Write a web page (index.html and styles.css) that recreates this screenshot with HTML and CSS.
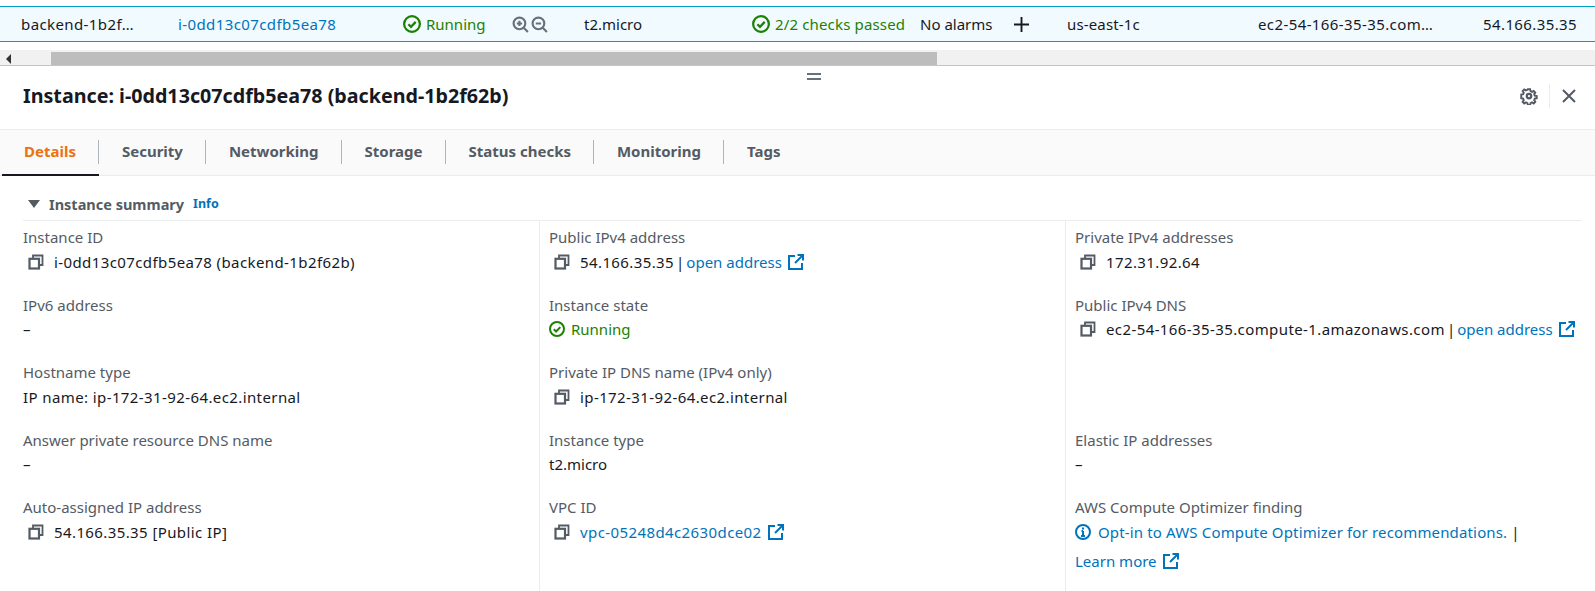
FILE: index.html
```html
<!DOCTYPE html>
<html lang="en">
<head>
<meta charset="utf-8">
<title>Instance details</title>
<link rel="stylesheet" href="styles.css">
</head>
<body>
<svg class="defs" width="0" height="0" aria-hidden="true">
  <symbol id="check" viewBox="0 0 16 16"><circle cx="8" cy="8" r="7" fill="none" stroke="currentColor" stroke-width="2"/><path d="M4.800 8.200l2.300 2.300 4.200-4.400" fill="none" stroke="currentColor" stroke-width="2"/></symbol>
  <symbol id="copy" viewBox="0 0 16 16"><path d="M5 4V1.500h9.500V11H11.500" fill="none" stroke="currentColor" stroke-width="1.800"/><rect x="1.500" y="4.800" width="9.500" height="9.700" fill="none" stroke="currentColor" stroke-width="2.200"/></symbol>
  <symbol id="ext" viewBox="0 0 16 16"><path d="M7 2H1v13h13V9" fill="none" stroke="currentColor" stroke-width="2"/><path d="M9.500 1H15v5.500M15 1L7 9" fill="none" stroke="currentColor" stroke-width="2"/></symbol>
</svg>
<div class="row">
  <div class="cell c1 num">backend-1b2f…</div>
  <div class="cell c2 link num">i-0dd13c07cdfb5ea78</div>
  <div class="cell c3 ok"><svg class="ico"><use href="#check"/></svg>Running</div>
  <div class="cell c4">
    <svg class="zoom" viewBox="0 0 16 16"><circle cx="7" cy="7" r="5.500" fill="none" stroke="currentColor" stroke-width="2"/><path d="M4.500 7h5M7 4.500v5M11 11l4 4" fill="none" stroke="currentColor" stroke-width="2"/></svg>
    <svg class="zoom" viewBox="0 0 16 16"><circle cx="7" cy="7" r="5.500" fill="none" stroke="currentColor" stroke-width="2"/><path d="M4.500 7h5M11 11l4 4" fill="none" stroke="currentColor" stroke-width="2"/></svg>
  </div>
  <div class="cell c5">t2.micro</div>
  <div class="cell c6 ok"><svg class="ico"><use href="#check"/></svg>2/2 checks passed</div>
  <div class="cell c7">No alarms</div>
  <div class="cell c8"><svg class="plus" viewBox="0 0 16 16"><path d="M8 0v16M0 8h16" fill="none" stroke="currentColor" stroke-width="2"/></svg></div>
  <div class="cell c9">us-east-1c</div>
  <div class="cell c10 num">ec2-54-166-35-35.com…</div>
  <div class="cell c11 num">54.166.35.35</div>
</div>
<div class="scrollbar">
  <span class="arrow"></span>
  <span class="thumb"></span>
</div>
<div class="handle"><span></span><span></span></div>
<header class="head">
  <h1>Instance: i-0dd13c07cdfb5ea78 (backend-1b2f62b)</h1>
  <div class="head-actions">
    <svg class="gear" viewBox="0 0 16 16"><path d="M6.800 1h2.400l.4 2 1.500.7 1.800-1 1.600 1.700-1.100 1.700.6 1.500 2 .4v2.400l-2 .4-.6 1.500 1.100 1.700-1.600 1.700-1.800-1-1.500.7-.4 2H6.800l-.4-2-1.500-.7-1.800 1-1.600-1.700 1.100-1.700-.6-1.500-2-.4V6.600l2-.4.600-1.500L1.500 3l1.600-1.700 1.800 1 1.500-.7z" transform="translate(1.100 1.100) scale(.86)" fill="none" stroke="currentColor" stroke-width="2"/><circle cx="8" cy="8" r="2" fill="none" stroke="currentColor" stroke-width="2"/></svg>
    <span class="sep"></span>
    <svg class="close" viewBox="0 0 16 16"><path d="M2 2l12 12M14 2L2 14" fill="none" stroke="currentColor" stroke-width="2"/></svg>
  </div>
</header>
<nav class="tabs">
  <a class="tab active">Details</a>
  <a class="tab">Security</a>
  <a class="tab">Networking</a>
  <a class="tab">Storage</a>
  <a class="tab">Status checks</a>
  <a class="tab">Monitoring</a>
  <a class="tab last">Tags</a>
</nav>
<section class="summary">
  <div class="summary-title"><span class="caret"></span><h2>Instance summary</h2><a class="info">Info</a></div>
  <div class="columns">
    <div class="col">
      <div class="item"><div class="label">Instance ID</div><div class="value indent num"><svg class="ico copy"><use href="#copy"/></svg>i-0dd13c07cdfb5ea78 (backend-1b2f62b)</div></div>
      <div class="item"><div class="label">IPv6 address</div><div class="value">–</div></div>
      <div class="item"><div class="label">Hostname type</div><div class="value num">IP name: ip-172-31-92-64.ec2.internal</div></div>
      <div class="item"><div class="label">Answer private resource DNS name</div><div class="value">–</div></div>
      <div class="item"><div class="label">Auto-assigned IP address</div><div class="value indent num"><svg class="ico copy"><use href="#copy"/></svg>54.166.35.35 [Public IP]</div></div>
    </div>
    <div class="col">
      <div class="item"><div class="label">Public IPv4 address</div><div class="value indent"><svg class="ico copy"><use href="#copy"/></svg><span class="num">54.166.35.35</span><span class="pipe">|</span><a class="link">open address</a><svg class="ico ext link"><use href="#ext"/></svg></div></div>
      <div class="item"><div class="label">Instance state</div><div class="value ok"><svg class="ico state"><use href="#check"/></svg>Running</div></div>
      <div class="item"><div class="label">Private IP DNS name (IPv4 only)</div><div class="value indent num"><svg class="ico copy"><use href="#copy"/></svg>ip-172-31-92-64.ec2.internal</div></div>
      <div class="item"><div class="label">Instance type</div><div class="value">t2.micro</div></div>
      <div class="item"><div class="label">VPC ID</div><div class="value indent"><svg class="ico copy"><use href="#copy"/></svg><a class="link num">vpc-05248d4c2630dce02</a><svg class="ico ext link"><use href="#ext"/></svg></div></div>
    </div>
    <div class="col">
      <div class="item"><div class="label">Private IPv4 addresses</div><div class="value indent num"><svg class="ico copy"><use href="#copy"/></svg>172.31.92.64</div></div>
      <div class="item"><div class="label">Public IPv4 DNS</div><div class="value indent"><svg class="ico copy"><use href="#copy"/></svg><span class="num">ec2-54-166-35-35.compute-1.amazonaws.com</span><span class="pipe">|</span><a class="link">open address</a><svg class="ico ext link"><use href="#ext"/></svg></div></div>
      <div class="item"><div class="label">&nbsp;</div><div class="value">&nbsp;</div></div>
      <div class="item"><div class="label">Elastic IP addresses</div><div class="value">–</div></div>
      <div class="item"><div class="label">AWS Compute Optimizer finding</div>
        <div class="value"><svg class="ico info-ico link" viewBox="0 0 16 16"><circle cx="8" cy="8" r="7" fill="none" stroke="currentColor" stroke-width="2"/><path d="M8 7v5M6 12h4M6.500 7H8" fill="none" stroke="currentColor" stroke-width="2"/><path d="M7 3.500h2v2H7z" fill="currentColor"/></svg><a class="link opt">Opt-in to AWS Compute Optimizer for recommendations.</a>&nbsp;|</div>
        <div class="value more"><a class="link">Learn more</a><svg class="ico ext link"><use href="#ext"/></svg></div>
      </div>
    </div>
  </div>
</section>
</body>
</html>
```
FILE: styles.css
```css
* { box-sizing: border-box; }
html, body { margin: 0; height: 591px; overflow: hidden; }
body { background: #fff; color: #16191f; font-family: "Noto Sans", "Open Sans", sans-serif; font-size: 15px; line-height: 20px; }
.defs { position: absolute; }
.ico { width: 16px; height: 16px; flex: none; }
.link { color: #0073bb; }
.ok { color: #1d8102; }
.num { letter-spacing: .4px; }
.opt { letter-spacing: .15px; }
.pipe { margin: 0 2px; }

.row { margin-top: 6px; height: 36px; display: flex; align-items: center; background: #f1faff; border-top: 1px solid #00a1c9; border-bottom: 1px solid #00a1c9; }
.cell { display: flex; align-items: center; white-space: nowrap; flex: none; }
.c1 { width: 178px; padding-left: 21px; }
.c2 { width: 225px; }
.c3 { width: 109px; gap: 5px; }
.c3 .ico, .c6 .ico { width: 18px; height: 18px; }
.c4 { width: 72px; gap: 2px; color: #687078; }
.zoom { width: 17px; height: 17px; }
.c5 { width: 168px; }
.c6 { width: 153px; margin-right: 15px; gap: 5px; overflow: hidden; letter-spacing: .15px; }
.c7 { width: 94px; }
.c8 { width: 53px; }
.plus { width: 15px; height: 15px; }
.c9 { width: 191px; letter-spacing: .15px; }
.c10 { width: 225px; }

.scrollbar { margin-top: 8px; height: 16px; display: flex; align-items: flex-end; background: #f1f1f1; border-bottom: 1px solid #c4c4c4; padding-top: 2px; position: relative; }
.arrow { position: absolute; left: 6px; top: 4px; border: 5px solid transparent; border-right: 5px solid #333; border-left: 0; }
.thumb { margin-left: 51px; width: 886px; height: 13px; background: #bdbdbd; }

.handle { height: 15px; display: flex; flex-direction: column; align-items: center; gap: 3px; padding: 7px 0 0 32px; }
.handle span { width: 14px; height: 2px; background: #687078; }

.head { height: 29px; display: flex; align-items: center; justify-content: space-between; padding: 0 18px 0 23px; margin-bottom: 19px; }
h1 { margin: 0; font-size: 19.700px; line-height: 24px; font-weight: 700; }
.head-actions { display: flex; align-items: center; color: #545b64; }
.gear { width: 18px; height: 18px; }
.sep { width: 1px; height: 24px; margin: 0 11px; background: #eaeded; }
.close { width: 16px; height: 16px; color: #545b64; }

.tabs { height: 47px; display: flex; align-items: center; background: #fafafa; border-top: 1px solid #eaeded; border-bottom: 1px solid #eaeded; font-weight: 700; color: #545b64; padding-left: 2px; }
.tab { height: 46px; display: flex; align-items: center; padding: 0 23px 4px 23px; position: relative; }
.tab::after { content: ""; position: absolute; right: 0; top: 10px; height: 24px; width: 1px; background: #aab7b8; }
.tab.last::after { display: none; }
.tab.active { color: #ec7211; border-bottom: 2px solid #16191f; padding: 0 23px 2px 22px; }

.summary { padding-top: 18px; }
.summary-title { display: flex; align-items: center; margin: 0 13px 0 23px; padding-left: 5px; border-bottom: 1px solid #eaeded; color: #545b64; padding-bottom: 6px; box-sizing: content-box; height: 20px; }
.caret { width: 0; height: 0; border: 6px solid transparent; border-top: 8px solid #545b64; border-bottom: 0; margin-right: 9px; }
h2 { margin: 0; font-size: 14.500px; line-height: 20px; font-weight: 700; }
.info { margin-left: 9px; color: #0073bb; font-size: 12.500px; font-weight: 700; }

.columns { display: grid; grid-template-columns: 539px 526px 1fr; height: 370px; }
.col { padding: 5px 0 0 23px; }
.col + .col { border-left: 1px solid #eaeded; padding-left: 9px; }
.item { height: 67.500px; }
.label { color: #545b64; height: 25px; line-height: 22px; }
.value { display: flex; align-items: center; height: 20px; padding-top: 1px; white-space: nowrap; }
.value.indent { padding-left: 5px; }
.copy { margin-right: 10px; color: #545b64; }
.ext { margin-left: 6px; width: 16px; height: 16px; }
.state { margin-right: 6px; }
.info-ico { margin-right: 7px; }
.more { margin-top: 9px; }
```
